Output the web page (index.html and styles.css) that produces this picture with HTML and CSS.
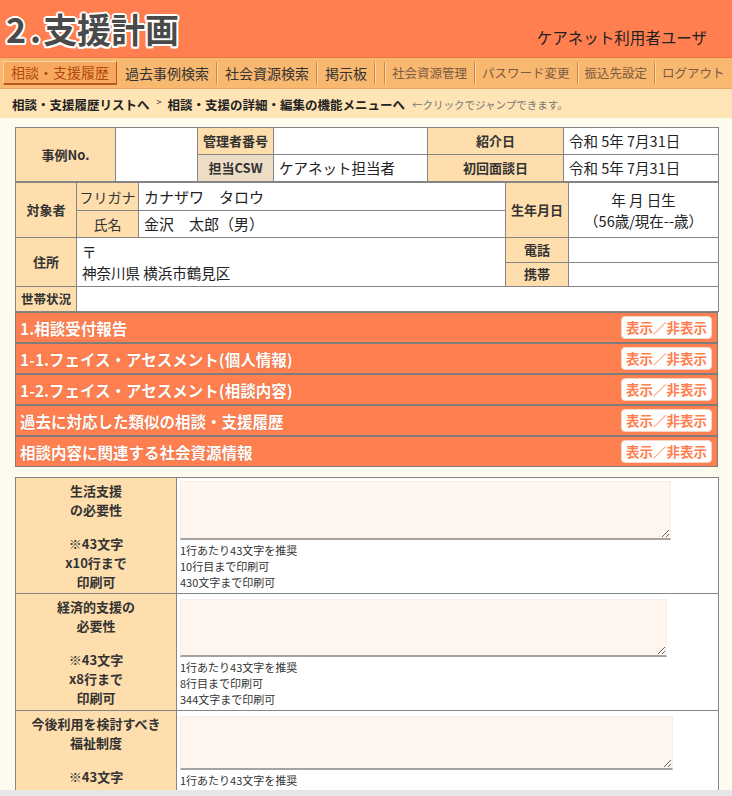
FILE: index.html
```html
<!DOCTYPE html>
<html lang="ja">
<head>
<meta charset="utf-8">
<title>2.支援計画</title>
<link rel="stylesheet" href="styles.css">
</head>
<body>
<header class="header">
  <h1 class="title"><span class="n2">2</span><span class="dot">.</span>支援計画</h1>
  <div class="user">ケアネット利用者ユーザ</div>
</header>
<nav class="nav">
  <span class="nav-item active">相談・支援履歴</span>
  <span class="nav-item">過去事例検索</span>
  <span class="nav-item">社会資源検索</span>
  <span class="nav-item">掲示板</span>
  <span class="nav-gap"></span>
  <span class="nav-item sub">社会資源管理</span>
  <span class="nav-item sub">パスワード変更</span>
  <span class="nav-item sub">振込先設定</span>
  <span class="nav-item sub">ログアウト</span>
</nav>
<div class="crumbs">
  <span>相談・支援履歴リストへ</span><span class="crumb-sep">&gt;</span><span>相談・支援の詳細・編集の機能メニューへ</span><span class="crumb-hint">←クリックでジャンプできます。</span>
</div>
<main class="main">
  <table class="t">
    <colgroup><col class="w100"><col class="w82"><col class="w76"><col class="w154"><col class="w136"><col class="w155"></colgroup>
    <tr class="r27">
      <td class="lbl" rowspan="2">事例No.</td>
      <td class="val" rowspan="2"></td>
      <td class="lbl">管理者番号</td>
      <td class="val"></td>
      <td class="lbl">紹介日</td>
      <td class="val">令和 5年 7月31日</td>
    </tr>
    <tr class="r27">
      <td class="lbl lbl-alt">担当CSW</td>
      <td class="val">ケアネット担当者</td>
      <td class="lbl">初回面談日</td>
      <td class="val">令和 5年 7月31日</td>
    </tr>
  </table>
  <table class="t">
    <colgroup><col class="w61"><col class="w62"><col class="w367"><col class="w63"><col class="w150"></colgroup>
    <tr class="r28">
      <td class="lbl" rowspan="2">対象者</td>
      <td class="lbl lbl-normal">フリガナ</td>
      <td class="val val-lg">カナザワ　タロウ</td>
      <td class="lbl" rowspan="2">生年月日</td>
      <td class="val val-center" rowspan="2"><div class="line21">年 月 日生</div><div class="line21">（56歳/現在--歳）</div></td>
    </tr>
    <tr class="r27">
      <td class="lbl lbl-normal">氏名</td>
      <td class="val val-lg">金沢　太郎（男）</td>
    </tr>
    <tr class="r25">
      <td class="lbl" rowspan="2">住所</td>
      <td class="val" colspan="2" rowspan="2"><div class="line21">〒</div><div class="line21">神奈川県 横浜市鶴見区</div></td>
      <td class="lbl">電話</td>
      <td class="val"></td>
    </tr>
    <tr class="r25">
      <td class="lbl">携帯</td>
      <td class="val"></td>
    </tr>
    <tr class="r25">
      <td class="lbl lbl-tight">世帯状況</td>
      <td class="val" colspan="4"></td>
    </tr>
  </table>
  <div class="sections">
    <div class="sec"><span class="sec-title">1.相談受付報告</span><span class="toggle">表示／非表示</span></div>
    <div class="sec"><span class="sec-title">1-1.フェイス・アセスメント(個人情報)</span><span class="toggle">表示／非表示</span></div>
    <div class="sec"><span class="sec-title">1-2.フェイス・アセスメント(相談内容)</span><span class="toggle">表示／非表示</span></div>
    <div class="sec"><span class="sec-title">過去に対応した類似の相談・支援履歴</span><span class="toggle">表示／非表示</span></div>
    <div class="sec"><span class="sec-title">相談内容に関連する社会資源情報</span><span class="toggle">表示／非表示</span></div>
  </div>
  <table class="t t3">
    <colgroup><col class="w161"><col class="w542"></colgroup>
    <tr>
      <td class="lbl lbl3">
        <div>生活支援</div><div>の必要性</div><div class="blank"></div><div>※43文字</div><div>x10行まで</div><div>印刷可</div>
      </td>
      <td class="val plan">
        <textarea class="ta ta1"></textarea>
        <div class="note">1行あたり43文字を推奨</div>
        <div class="note">10行目まで印刷可</div>
        <div class="note">430文字まで印刷可</div>
      </td>
    </tr>
    <tr>
      <td class="lbl lbl3">
        <div>経済的支援の</div><div>必要性</div><div class="blank"></div><div>※43文字</div><div>x8行まで</div><div>印刷可</div>
      </td>
      <td class="val plan">
        <textarea class="ta ta2"></textarea>
        <div class="note">1行あたり43文字を推奨</div>
        <div class="note">8行目まで印刷可</div>
        <div class="note">344文字まで印刷可</div>
      </td>
    </tr>
    <tr>
      <td class="lbl lbl3">
        <div>今後利用を検討すべき</div><div>福祉制度</div><div class="blank"></div><div>※43文字</div><div>x6行まで</div><div>印刷可</div>
      </td>
      <td class="val plan">
        <textarea class="ta ta3"></textarea>
        <div class="note">1行あたり43文字を推奨</div>
        <div class="note">6行目まで印刷可</div>
        <div class="note">258文字まで印刷可</div>
      </td>
    </tr>
  </table>
</main>
<div class="hscroll"></div>
</body>
</html>
```
FILE: styles.css
```css
html { overflow: hidden; }
body {
  margin: 0;
  background: #FDFAEE;
  font-family: "Noto Sans CJK JP", "Noto Sans", sans-serif;
  color: #222;
}

.header {
  height: 57px;
  background: #FF7F50;
  display: flex;
  justify-content: space-between;
  align-items: flex-start;
  border-bottom: 1px solid #EE7443;
}
.title {
  margin: 0 0 0 6px;
  font-size: 34px;
  line-height: 57px;
  font-weight: bold;
  color: #4a4a4a;
  white-space: nowrap;
  text-shadow: 2px 0 #fff, -2px 0 #fff, 0 2px #fff, 0 -2px #fff,
    1.5px 1.5px #fff, -1.5px 1.5px #fff, 1.5px -1.5px #fff, -1.5px -1.5px #fff;
}
.n2 { margin-right: 4px; }
.dot { margin-right: 2px; }
.user {
  margin: 27px 25px 0 0;
  font-size: 15.5px;
  line-height: 20px;
  color: #222;
  white-space: nowrap;
}

.nav {
  height: 30px;
  background: #F9B86F;
  display: flex;
  align-items: center;
  border-bottom: 1px solid #EBA560;
  overflow: hidden;
}
.nav-item {
  flex-shrink: 0;
  white-space: nowrap;
  padding: 0 7px 0 8px;
  font-size: 14px;
  line-height: 22px;
  color: #333;
  border-right: 1px solid #D08646;
  box-shadow: 1px 0 0 #FFD9AA;
}
.nav-item.active {
  margin-left: 3px;
  padding: 0 7px;
  line-height: 21px;
  background: #F6A95F;
  color: #B3480F;
  border: 1px solid;
  border-color: #FFD2A0 #B8581E #B8581E #FFD2A0;
  border-bottom-width: 2px;
  box-shadow: none;
}
.nav-gap {
  flex-shrink: 0;
  width: 9px;
  height: 22px;
  border-right: 1px solid #D08646;
  box-shadow: 1px 0 0 #FFD9AA;
}
.nav-item.sub {
  padding: 0 7px;
  font-size: 12.5px;
  color: #7A5A42;
}

.crumbs {
  height: 29px;
  background: #FFE4B5;
  display: flex;
  align-items: center;
  padding: 1px 0 0 12px;
  box-sizing: border-box;
  font-size: 12.5px;
  font-weight: bold;
  color: #222;
  white-space: nowrap;
}
.crumb-sep {
  font-size: 9px;
  font-weight: normal;
  margin: 5px 6px 0 7px;
  align-self: flex-start;
}
.crumb-hint {
  font-weight: normal;
  font-size: 10.5px;
  color: #777;
  margin-left: 7px;
}

.main { padding: 9px 14px 0 15px; }

.t {
  width: 703px;
  border-collapse: collapse;
  table-layout: fixed;
}
.t td {
  border: 1px solid #858585;
  padding: 0 5px;
  line-height: 18px;
  white-space: nowrap;
}
.w100 { width: 100px; } .w82 { width: 82px; } .w76 { width: 76px; }
.w154 { width: 154px; } .w136 { width: 136px; } .w155 { width: 155px; }
.w61 { width: 61px; } .w62 { width: 62px; } .w367 { width: 367px; }
.w63 { width: 63px; } .w150 { width: 150px; }
.w161 { width: 161px; } .w542 { width: 542px; }
.r27 { height: 27px; }
.r28 { height: 28px; }
.r25 { height: 24.5px; }

.lbl {
  background: #FFDEAD;
  font-weight: bold;
  font-size: 13px;
  text-align: center;
  color: #333;
}
.lbl-alt { background: #EEDDC6; }
.t td.lbl-normal { font-weight: normal; font-size: 14px; padding: 0 2px; }
.t td.lbl-tight { padding: 0 2px; font-size: 12.5px; }
.val { background: #fff; font-size: 14.5px; color: #222; }
.val-lg { font-size: 15px; }
.val-center { text-align: center; padding-right: 14px; }
.line21 { line-height: 21px; }

.sections { display: flex; flex-direction: column; width: 703px; }
.sec {
  height: 29px;
  background: #FF7F50;
  border: 1px solid #7D7D7D;
  display: flex;
  align-items: center;
  justify-content: space-between;
  padding: 0 5px 0 4px;
}
.sec-title {
  color: #fff;
  font-weight: bold;
  font-size: 15.5px;
  line-height: 20px;
  margin-top: 1px;
  white-space: nowrap;
  text-shadow: 0 0 1px rgba(150, 60, 20, 0.5);
}
.toggle {
  background: #fff;
  color: #FF7F50;
  font-weight: bold;
  font-size: 13.5px;
  line-height: 21px;
  padding: 0 4px;
  border-radius: 4px;
  border: 1px solid #F3D6C6;
  white-space: nowrap;
}

.t3 { margin-top: 10px; }
.t3 td.lbl3 {
  padding: 3px 4px 2px;
  vertical-align: middle;
}
.lbl3 div { line-height: 19px; }
.lbl3 div.blank { height: 15px; }
.t3 td.plan {
  padding: 3px;
  vertical-align: top;
}
.ta {
  display: block;
  box-sizing: border-box;
  margin: 0;
  background: #FFF5EF;
  border: 1px solid #FBEDE5;
  border-bottom: 2px solid #A3A3A3;
  font-family: inherit;
}
.ta1 { width: 491px; height: 59px; }
.ta2 { width: 487px; height: 58px; margin-top: 2px; }
.ta3 { width: 493px; height: 54px; margin-top: 2px; }
.note {
  font-size: 11px;
  line-height: 16px;
  color: #333;
}
.plan .note:first-of-type { margin-top: 2px; }

.hscroll {
  position: fixed;
  left: 0;
  right: 0;
  bottom: 0;
  height: 6px;
  background: #E6E6E6;
}
```
